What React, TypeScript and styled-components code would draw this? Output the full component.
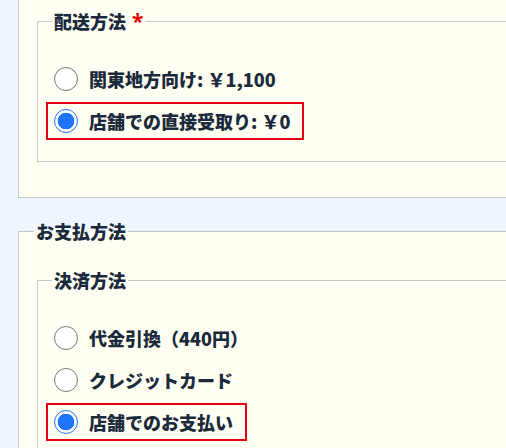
import { useState } from 'react';
import styled, { createGlobalStyle } from 'styled-components';

const GlobalStyle = createGlobalStyle`
  html, body {
    margin: 0;
    padding: 0;
    background: #eff6ff;
    overflow: hidden;
  }
  body {
    font-family: 'Noto Sans CJK JP', 'Noto Sans', sans-serif;
    color: #1b2a3b;
  }
`;

const Page = styled.div`
  width: 620px;
  margin-top: -15px;
  padding-left: 18px;
  display: flex;
  flex-direction: column;
  gap: 20px;
`;

const OuterSet = styled.fieldset`
  margin: 0;
  padding: 22px 0 35px 18px;
  border: 1px solid #c8c8c8;
  background: #fefff2;
  min-width: 0;
`;

const OuterLegend = styled.legend`
  margin-left: -3px;
  padding: 0 2px;
  font-size: 18px;
  font-weight: 900;
  line-height: 27px;
`;

const InnerSet = styled.fieldset`
  margin: 0;
  padding: 25px 0 21px 8px;
  border: 1px solid #c8c8c8;
  min-width: 0;
  display: flex;
  flex-direction: column;
  gap: 4px;
`;

const InnerLegend = styled.legend`
  margin-left: 6px;
  padding: 0 2px;
  font-size: 18px;
  font-weight: 900;
  line-height: 27px;
`;

const Required = styled.span`
  color: #e60000;
  margin-left: 6px;
  font-family: 'Noto Sans', sans-serif;
  font-size: 21px;
  font-weight: 700;
`;

const Option = styled.label<{ $active: boolean }>`
  align-self: flex-start;
  display: flex;
  align-items: center;
  gap: 11px;
  height: 34px;
  padding: 0 12px 0 6px;
  border: 2px solid ${p => (p.$active ? '#e60012' : 'transparent')};
  font-size: 18px;
  font-weight: 900;
  cursor: pointer;
`;

const Radio = styled.input`
  appearance: none;
  box-sizing: border-box;
  width: 24px;
  height: 24px;
  margin: 0;
  border-radius: 50%;
  border: 1px solid #767676;
  background: #fff;
  &:checked {
    border-color: #1f74ff;
    background: radial-gradient(circle, #1f74ff 0 8px, #fff 8.6px);
  }
`;

interface Choice {
  value: string;
  label: string;
}

const shipping: Choice[] = [
  { value: 'kanto', label: '関東地方向け: ￥1,100' },
  { value: 'store', label: '店舗での直接受取り: ￥0' },
];

const payment: Choice[] = [
  { value: 'cod', label: '代金引換（440円）' },
  { value: 'card', label: 'クレジットカード' },
  { value: 'store', label: '店舗でのお支払い' },
];

function RadioGroup(props: {
  name: string;
  choices: Choice[];
  value: string;
  onChange: (v: string) => void;
}) {
  const { name, choices, value, onChange } = props;
  return (
    <>
      {choices.map(c => (
        <Option key={c.value} $active={value === c.value}>
          <Radio
            type='radio'
            name={name}
            value={c.value}
            checked={value === c.value}
            onChange={() => onChange(c.value)}
          />
          {c.label}
        </Option>
      ))}
    </>
  );
}

export default function App() {
  const [ship, setShip] = useState('store');
  const [pay, setPay] = useState('store');
  return (
    <>
      <GlobalStyle />
      <Page>
        <OuterSet>
          <InnerSet>
            <InnerLegend>
              配送方法<Required>*</Required>
            </InnerLegend>
            <RadioGroup
              name='shipping'
              choices={shipping}
              value={ship}
              onChange={setShip}
            />
          </InnerSet>
        </OuterSet>
        <OuterSet>
          <OuterLegend>お支払方法</OuterLegend>
          <InnerSet>
            <InnerLegend>決済方法</InnerLegend>
            <RadioGroup
              name='payment'
              choices={payment}
              value={pay}
              onChange={setPay}
            />
          </InnerSet>
        </OuterSet>
      </Page>
    </>
  );
}
